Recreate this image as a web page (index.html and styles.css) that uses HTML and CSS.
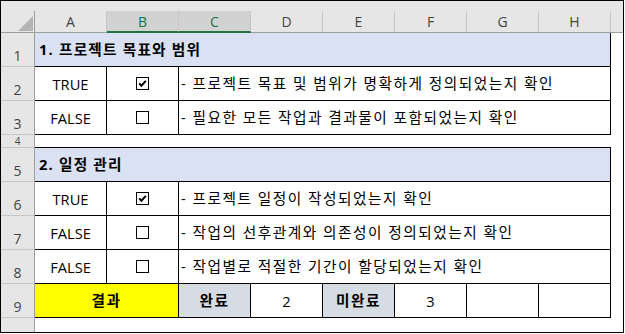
FILE: index.html
```html
<!DOCTYPE html>
<html lang="ko">
<head>
<meta charset="utf-8">
<link rel="stylesheet" href="styles.css">
</head>
<body>
<div class="frame">
  <div class="sheet">
    <div class="ch corner"><div class="lbl"><span class="tri"></span></div></div>
    <div class="ch"><div class="lbl">A</div></div>
    <div class="ch sel"><div class="lbl">B</div></div>
    <div class="ch sel"><div class="lbl">C</div></div>
    <div class="ch"><div class="lbl">D</div></div>
    <div class="ch"><div class="lbl">E</div></div>
    <div class="ch"><div class="lbl">F</div></div>
    <div class="ch"><div class="lbl">G</div></div>
    <div class="ch"><div class="lbl">H</div></div>
    <div class="ch end"><div class="lbl"></div></div>

    <div class="rh">1</div>
    <div class="c sec">1. 프로젝트 목표와 범위</div>
    <div class="x"></div>

    <div class="rh">2</div>
    <div class="c">TRUE</div>
    <div class="c"><svg class="cb" width="13" height="13" viewBox="0 0 13 13"><rect x="0.5" y="0.5" width="12" height="12" fill="#fff" stroke="#000"/><path d="M3.2 6.4 L5.4 8.8 L9.8 3.8" fill="none" stroke="#000" stroke-width="2"/></svg></div>
    <div class="c desc">- 프로젝트 목표 및 범위가 명확하게 정의되었는지 확인</div>
    <div class="x"></div>

    <div class="rh">3</div>
    <div class="c">FALSE</div>
    <div class="c"><svg class="cb" width="13" height="13" viewBox="0 0 13 13"><rect x="0.5" y="0.5" width="12" height="12" fill="#fff" stroke="#000"/></svg></div>
    <div class="c desc">- 필요한 모든 작업과 결과물이 포함되었는지 확인</div>
    <div class="x"></div>

    <div class="rh short">4</div>
    <div class="gap"></div>
    <div class="x"></div>

    <div class="rh">5</div>
    <div class="c sec">2. 일정 관리</div>
    <div class="x"></div>

    <div class="rh">6</div>
    <div class="c">TRUE</div>
    <div class="c"><svg class="cb" width="13" height="13" viewBox="0 0 13 13"><rect x="0.5" y="0.5" width="12" height="12" fill="#fff" stroke="#000"/><path d="M3.2 6.4 L5.4 8.8 L9.8 3.8" fill="none" stroke="#000" stroke-width="2"/></svg></div>
    <div class="c desc">- 프로젝트 일정이 작성되었는지 확인</div>
    <div class="x"></div>

    <div class="rh">7</div>
    <div class="c">FALSE</div>
    <div class="c"><svg class="cb" width="13" height="13" viewBox="0 0 13 13"><rect x="0.5" y="0.5" width="12" height="12" fill="#fff" stroke="#000"/></svg></div>
    <div class="c desc">- 작업의 선후관계와 의존성이 정의되었는지 확인</div>
    <div class="x"></div>

    <div class="rh">8</div>
    <div class="c">FALSE</div>
    <div class="c"><svg class="cb" width="13" height="13" viewBox="0 0 13 13"><rect x="0.5" y="0.5" width="12" height="12" fill="#fff" stroke="#000"/></svg></div>
    <div class="c desc">- 작업별로 적절한 기간이 할당되었는지 확인</div>
    <div class="x"></div>

    <div class="rh">9</div>
    <div class="c res">결과</div>
    <div class="c lab">완료</div>
    <div class="c">2</div>
    <div class="c lab">미완료</div>
    <div class="c">3</div>
    <div class="c"></div>
    <div class="c"></div>
    <div class="x"></div>

    <div class="rh last"></div>
    <div class="tail"></div>
  </div>
</div>
</body>
</html>
```

FILE: styles.css
```css
* {
  box-sizing: border-box;
  margin: 0;
  padding: 0;
}

body {
  width: 625px;
  height: 334px;
  background: #fff;
  font-family: "Open Sans", "Noto Sans CJK KR", sans-serif;
  overflow: hidden;
}

.frame {
  width: 624px;
  height: 333px;
  border: 1px solid #000;
  overflow: hidden;
}

.sheet {
  display: grid;
  grid-template-columns: 34px repeat(8, 72px) 12px;
  grid-template-rows: 32px 34px 34px 34px 13px 34px 34px 34px 34px 34px 14px;
}

/* column headers */
.ch {
  background: #e6e6e6;
  padding-top: 10px;
  border-bottom: 1px solid #9e9e9e;
}

.ch .lbl {
  height: 21px;
  border-right: 1px solid #c6c6c6;
  display: flex;
  align-items: center;
  justify-content: center;
  font-size: 14px;
  color: #444;
}

.ch.corner .lbl {
  border-right-color: #9e9e9e;
  position: relative;
}

.tri {
  position: absolute;
  right: 1px;
  bottom: 1px;
  width: 0;
  height: 0;
  border-left: 15px solid transparent;
  border-bottom: 15px solid #b4b4b4;
}

.ch.sel {
  border-bottom-color: #217346;
}

.ch.sel .lbl {
  background: #d2d2d2;
  color: #217346;
  border-bottom: 1px solid #217346;
}

.ch.end .lbl {
  border-right: none;
}

/* row headers */
.rh {
  background: #e6e6e6;
  border-right: 1px solid #9e9e9e;
  border-bottom: 1px solid #c6c6c6;
  display: flex;
  align-items: flex-end;
  justify-content: center;
  font-size: 14px;
  line-height: 20px;
  color: #444;
  overflow: hidden;
}

.rh.short {
  align-items: center;
  font-size: 10px;
  line-height: 12px;
}

.rh.last {
  border-bottom: none;
}

/* cells */
.c {
  border-right: 1px solid #000;
  border-bottom: 1px solid #000;
  display: flex;
  align-items: center;
  justify-content: center;
  font-size: 14.67px;
  color: #000;
  white-space: nowrap;
}

.sec,
.desc,
.res,
.lab {
  letter-spacing: 1.5px;
  padding-bottom: 2px;
}

.sec {
  grid-column: span 8;
  background: #d9e1f2;
  justify-content: flex-start;
  padding-left: 4px;
  font-weight: bold;
  letter-spacing: 1.2px;
}

.desc {
  grid-column: span 6;
  justify-content: flex-start;
  padding-left: 2px;
}

.gap {
  grid-column: span 8;
  border-bottom: 1px solid #000;
}

.res {
  grid-column: span 2;
  background: #ffff00;
  font-weight: bold;
}

.lab {
  background: #d6dce4;
  font-weight: bold;
}

.x {
  background: #fff;
}

.tail {
  grid-column: span 9;
  background: #fff;
}

.cb {
  display: block;
}
```
